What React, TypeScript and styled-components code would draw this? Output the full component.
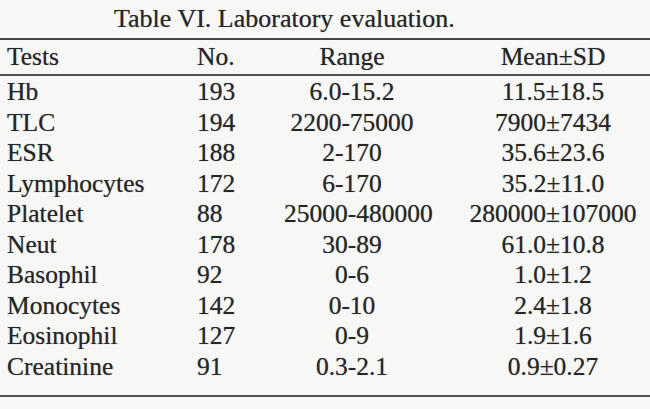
import React from "react";
import styled, { createGlobalStyle } from "styled-components";

const GlobalStyle = createGlobalStyle`
  html, body {
    margin: 0;
    padding: 0;
    background: #f7f7f6;
  }
  body {
    font-family: "Liberation Serif", serif;
    color: #262626;
  }
`;

const Page = styled.div`
  width: 650px;
  height: 409px;
  overflow: hidden;
  background: #f7f7f6;
`;

// scanned print look: slightly soft, heavy ink
const Caption = styled.div`
  font-family: "Liberation Serif", serif;
  font-size: 26px;
  line-height: 30px;
  padding: 4px 0 0 114px;
  height: 36px;
  box-sizing: border-box;
  text-shadow: 0 0 0.9px rgba(0, 0, 0, 0.45);
`;

const Table = styled.div`
  font-family: "Liberation Serif", serif;
  border-top: 2px solid #454545;
  border-bottom: 2px solid #4f4f4f;
  margin-top: 2px;
  font-size: 25.5px;
  text-shadow: 0 0 0.9px rgba(0, 0, 0, 0.45);
`;

const Head = styled.div`
  border-bottom: 2px solid #4f4f4f;
  padding: 2px 0 2px;
`;

const Body = styled.div`
  padding: 1px 0 13px;
`;

const Row = styled.div<{ $h: number }>`
  display: grid;
  grid-template-columns: 189px 88px 136px 1fr;
  padding-left: 7px;
  line-height: ${(p) => p.$h}px;
  white-space: nowrap;
`;

const Cell = styled.div<{ $col: "test" | "no" | "range" | "mean" }>`
  text-align: ${(p) => (p.$col === "range" || p.$col === "mean" ? "center" : "left")};
  padding-left: ${(p) => (p.$col === "mean" ? "36px" : p.$col === "no" ? "1px" : "0")};
`;

const rows = [
  ["Hb", "193", "6.0-15.2", "11.5±18.5"],
  ["TLC", "194", "2200-75000", "7900±7434"],
  ["ESR", "188", "2-170", "35.6±23.6"],
  ["Lymphocytes", "172", "6-170", "35.2±11.0"],
  ["Platelet", "88", "25000-480000", "280000±107000"],
  ["Neut", "178", "30-89", "61.0±10.8"],
  ["Basophil", "92", "0-6", "1.0±1.2"],
  ["Monocytes", "142", "0-10", "2.4±1.8"],
  ["Eosinophil", "127", "0-9", "1.9±1.6"],
  ["Creatinine", "91", "0.3-2.1", "0.9±0.27"],
];

export default function App() {
  return (
    <Page>
      <GlobalStyle />
      <Caption>Table VI. Laboratory evaluation.</Caption>
      <Table>
        <Head>
          <Row $h={30}>
            <Cell $col="test">Tests</Cell>
            <Cell $col="no">No.</Cell>
            <Cell $col="range">Range</Cell>
            <Cell $col="mean">Mean±SD</Cell>
          </Row>
        </Head>
        <Body>
          {rows.map(([test, no, range, mean]) => (
            <Row $h={30.5} key={test}>
              <Cell $col="test">{test}</Cell>
              <Cell $col="no">{no}</Cell>
              <Cell $col="range">{range}</Cell>
              <Cell $col="mean">{mean}</Cell>
            </Row>
          ))}
        </Body>
      </Table>
    </Page>
  );
}
